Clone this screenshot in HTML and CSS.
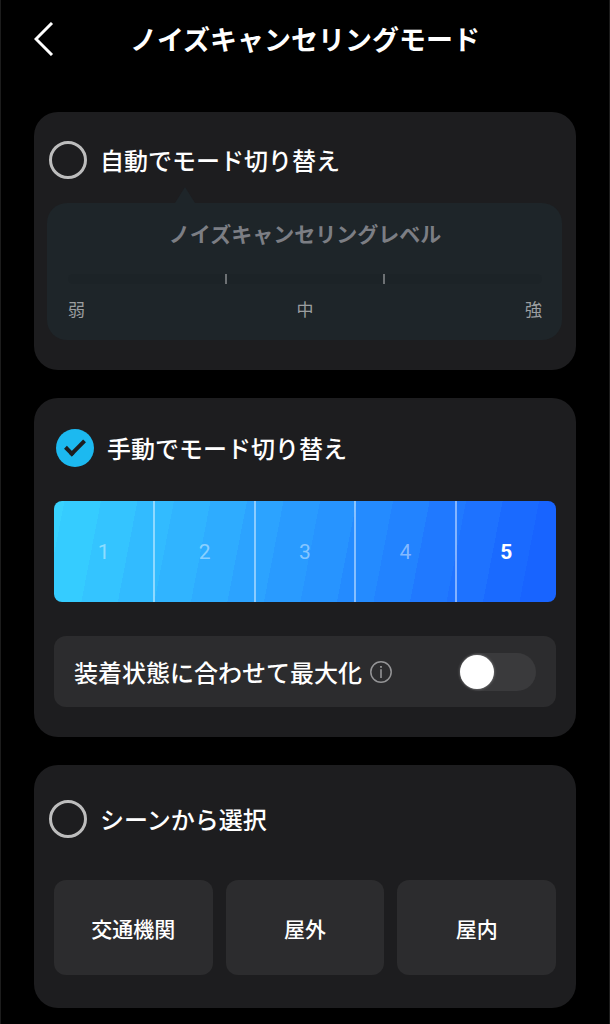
FILE: index.html
```html
<!DOCTYPE html>
<html lang="ja">
<head>
    <meta charset="UTF-8">
    <meta name="viewport" content="width=device-width, initial-scale=1.0">
    <title>ノイズキャンセリングモード</title>
    <link rel="stylesheet" href="styles.css">
</head>
<body>
    <header class="top-bar">
        <button type="button" class="back-btn" aria-label="戻る">
            <svg width="20" height="34" viewBox="0 0 20 34" fill="none" stroke="#fff" stroke-width="3">
                <path d="M18 1 L2 17 L18 33"/>
            </svg>
        </button>
        <h1>ノイズキャンセリングモード</h1>
    </header>

    <main class="modes">
        <!-- Automatic -->
        <section class="card card-auto">
            <div class="mode-head">
                <input type="radio" id="modeAuto" name="mode" value="auto">
                <label for="modeAuto">自動でモード切り替え</label>
            </div>
            <div class="level-panel">
                <label class="level-title" for="autoLevel">ノイズキャンセリングレベル</label>
                <input type="range" class="level-range" id="autoLevel" min="0" max="3" disabled>
                <div class="level-marks">
                    <span>弱</span>
                    <span>中</span>
                    <span>強</span>
                </div>
            </div>
        </section>

        <!-- Manual -->
        <section class="card card-manual">
            <div class="mode-head">
                <input type="radio" id="modeManual" name="mode" value="manual" checked>
                <label for="modeManual">手動でモード切り替え</label>
            </div>
            <div class="steps">
                <button type="button">1</button>
                <button type="button">2</button>
                <button type="button">3</button>
                <button type="button">4</button>
                <button type="button" class="active">5</button>
            </div>
            <div class="fit-row">
                <label for="fitMax">装着状態に合わせて最大化</label>
                <button type="button" class="info-btn" aria-label="詳細">
                    <svg width="22" height="22" viewBox="0 0 22 22" fill="none" stroke="#949496">
                        <circle cx="11" cy="11" r="10.2" stroke-width="1.5"/>
                        <path d="M11 8.2V17" stroke-width="1.6"/>
                        <path d="M11 5V6.8" stroke-width="1.8"/>
                    </svg>
                </button>
                <input type="checkbox" class="switch" id="fitMax">
            </div>
        </section>

        <!-- Scene -->
        <section class="card card-scene">
            <div class="mode-head">
                <input type="radio" id="modeScene" name="mode" value="scene">
                <label for="modeScene">シーンから選択</label>
            </div>
            <div class="scenes">
                <button type="button">交通機関</button>
                <button type="button">屋外</button>
                <button type="button">屋内</button>
            </div>
        </section>
    </main>
</body>
</html>
```

FILE: styles.css
```css
* {
    box-sizing: border-box;
}

body {
    margin: 0;
    min-height: 100vh;
    background: #000;
    border: solid #1c1c1c;
    border-width: 0 1px;
    color: #fff;
    font-family: "Noto Sans CJK JP", sans-serif;
}

button {
    padding: 0;
    border: none;
    background: none;
    color: inherit;
    font-family: inherit;
    cursor: pointer;
}

svg {
    display: block;
}

/* Header */
.top-bar {
    display: grid;
    grid-template-columns: 20px 1fr 20px;
    align-items: center;
    padding: 19px 33px 0;
    margin-bottom: 53px;
}

h1 {
    margin: 0;
    font-size: 27px;
    line-height: 40px;
    font-weight: 700;
    text-align: center;
}

/* Cards */
.modes {
    display: flex;
    flex-direction: column;
    gap: 28px;
    padding: 0 33px 16px;
}

.card {
    background: #1d1d1f;
    border-radius: 24px;
}

.card-auto {
    padding: 29px 14px 30px 13px;
}

.card-manual {
    padding: 31px 20px 30px;
}

.card-scene {
    padding: 35px 20px 33px;
}

.mode-head {
    display: flex;
    align-items: center;
    gap: 13px;
}

.card-auto .mode-head {
    margin: 0 2px 24px;
}

.card-manual .mode-head {
    margin: 0 2px 34px;
}

.card-scene .mode-head {
    margin: 0 -5px 42px;
}

.mode-head label,
.fit-row label {
    font-size: 24px;
    line-height: 36px;
    font-weight: 500;
}

.mode-head input {
    appearance: none;
    width: 38px;
    height: 38px;
    margin: 0;
    border: 3px solid #bdbdbd;
    border-radius: 50%;
}

.mode-head input:checked {
    display: grid;
    place-items: center;
    border: none;
    background: #1cb9f0;
}

.mode-head input:checked::before {
    content: "";
    width: 16px;
    height: 7px;
    margin-bottom: 5px;
    border: solid #1d1d1f;
    border-width: 0 0 4px 4px;
    transform: rotate(-45deg);
}

/* Level balloon */
.level-panel {
    position: relative;
    display: flex;
    flex-direction: column;
    padding: 15px 20px 19px 21px;
    background: #1e2529;
    border-radius: 20px;
}

.level-panel::before {
    content: "";
    position: absolute;
    top: -16px;
    left: 128px;
    width: 20px;
    height: 16px;
    background: inherit;
    clip-path: polygon(50% 0, 100% 100%, 0 100%);
}

.level-title {
    color: #7c7e84;
    font-size: 21px;
    line-height: 30px;
    font-weight: 700;
    text-align: center;
}

.level-range {
    appearance: none;
    width: 100%;
    height: 10px;
    margin: 26px 0 13px;
    border-radius: 5px;
    background:
        linear-gradient(#6d7174, #6d7174) 33.3% 0 / 2px 100% no-repeat,
        linear-gradient(#6d7174, #6d7174) 66.7% 0 / 2px 100% no-repeat,
        #1c2327;
}

.level-range::-webkit-slider-thumb {
    appearance: none;
    width: 10px;
    height: 10px;
    opacity: 0;
}

.level-marks {
    display: flex;
    justify-content: space-between;
    color: #9b9ea0;
    font-size: 17px;
    line-height: 24px;
}

/* Strength steps */
.steps {
    display: grid;
    grid-template-columns: repeat(5, 1fr);
    height: 101px;
    margin-bottom: 34px;
    overflow: hidden;
    border-radius: 8px;
    background: linear-gradient(101deg,
        #38d2ff 2%, #35ccff 2% 9%, #34c4ff 9% 16%, #32bbff 16% 23%,
        #30b4ff 23% 30%, #2eacff 30% 37%, #2ca3ff 37% 44%, #299bff 44% 51%,
        #2794ff 51% 58%, #248bff 58% 65%, #2283ff 65% 72%, #2079ff 72% 79%,
        #1e72ff 79% 86%, #1a6aff 86% 93%, #1864ff 93%);
}

.steps button {
    border: solid rgba(255, 255, 255, 0.45);
    border-width: 0 1px;
    color: rgba(255, 255, 255, 0.45);
    font-family: Roboto, sans-serif;
    font-size: 21px;
}

.steps button:first-child {
    border-left: none;
}

.steps button:last-child {
    border-right: none;
}

.steps .active {
    color: #fff;
    font-weight: 700;
}

/* Fit toggle */
.fit-row {
    display: flex;
    align-items: center;
    gap: 8px;
    height: 71px;
    padding: 0 20px;
    border-radius: 12px;
    background: #2c2c2e;
}

.switch {
    appearance: none;
    width: 76px;
    height: 38px;
    margin: 0 0 0 auto;
    padding: 2px 0;
    border-radius: 19px;
    background: #3a3a3c;
}

.switch::before {
    content: "";
    display: block;
    width: 34px;
    height: 34px;
    border-radius: 50%;
    background: #fff;
    box-shadow: 0 0 3px rgba(255, 255, 255, 0.4);
}

.switch:checked {
    background: #1cb9f0;
}

.switch:checked::before {
    margin-left: auto;
}

/* Scene buttons */
.scenes {
    display: grid;
    grid-template-columns: repeat(3, 1fr);
    gap: 13px;
}

.scenes button {
    height: 95px;
    border-radius: 12px;
    background: #2c2c2e;
    font-size: 21px;
    font-weight: 500;
}
```
